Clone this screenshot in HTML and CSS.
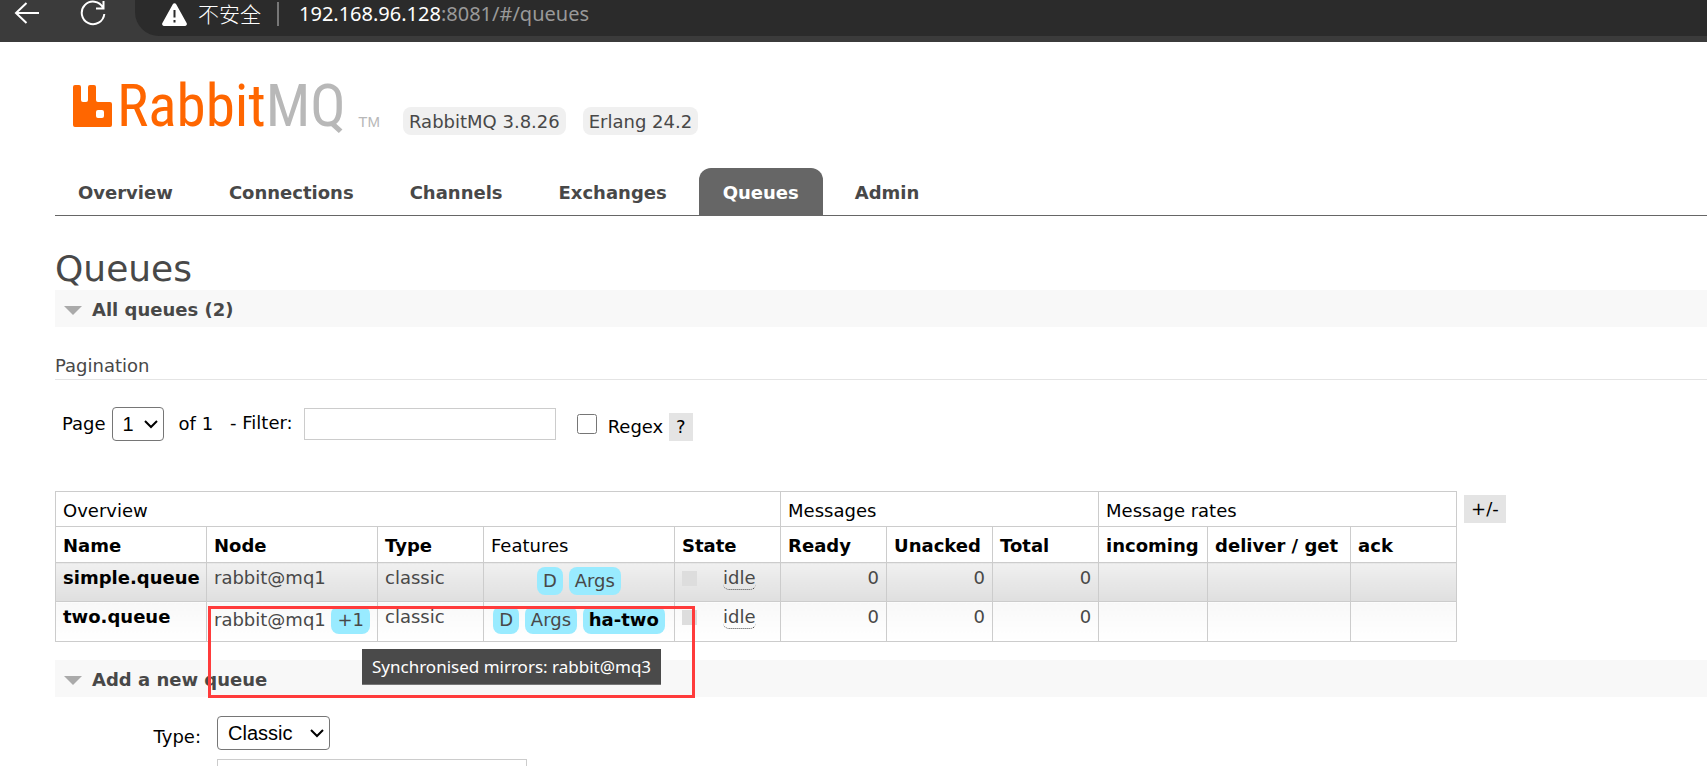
FILE: index.html
```html
<!DOCTYPE html>
<html lang="en">
<head>
<meta charset="utf-8">
<title>RabbitMQ Management</title>
<link rel="stylesheet" href="styles.css">
</head>
<body>
<div class="browser-bar">
  <button class="browser-btn" type="button" aria-label="Back">
    <svg width="26" height="26" viewBox="0 0 26 26" fill="none" stroke="#fff" stroke-width="2"><path d="M25 13H2M12.500 3L2 13l10.500 10"/></svg>
  </button>
  <button class="browser-btn reload" type="button" aria-label="Reload">
    <svg width="26" height="26" viewBox="0 0 26 26" fill="none" stroke="#fff" stroke-width="2"><path d="M23 7.500A11.300 11.300 0 1 0 24.300 14M23.500 1v7.500H16"/></svg>
  </button>
  <div class="address">
    <svg width="25" height="23" viewBox="0 0 25 23"><path d="M10.800 1.200a2 2 0 0 1 3.400 0L24.600 20a2 2 0 0 1-1.700 3H2.100a2 2 0 0 1-1.700-3z" fill="#fff"/><path d="M12.500 7v7.500M12.500 17v2.500" stroke="#2b2b2b" stroke-width="2"/></svg>
    <span class="insecure">不安全</span>
    <span class="divider"></span>
    <span class="url"><b>192.168.96.128</b>:8081/#/queues</span>
  </div>
</div>

<div class="page">
  <header class="header">
    <a class="logo" href="#" aria-label="RabbitMQ">
      <svg width="39" height="42" viewBox="0 0 39 42"><path fill="#f60" fill-rule="evenodd" d="M2 0h4q2 0 2 2v13q0 2 2 2h3q2 0 2-2V2q0-2 2-2h4q2 0 2 2v13q0 2 2 2h12q2 0 2 2v21q0 2-2 2H2q-2 0-2-2V2q0-2 2-2zM25 25q-2 0-2 2v4q0 2 2 2h4q2 0 2-2v-4q0-2-2-2z"/></svg>
      <span class="wordmark">Rabbit<span class="mq">MQ</span></span><span class="tm">TM</span>
    </a>
    <span class="version">RabbitMQ 3.8.26</span>
    <span class="version">Erlang 24.2</span>
  </header>

  <nav class="tabs">
    <a href="#">Overview</a>
    <a href="#">Connections</a>
    <a href="#">Channels</a>
    <a href="#">Exchanges</a>
    <a href="#" class="selected">Queues</a>
    <a href="#">Admin</a>
  </nav>

  <main class="main">
    <h1>Queues</h1>
    <h2 class="section"><span class="arrow"></span>All queues (2)</h2>

    <h3 class="subhead">Pagination</h3>
    <div class="pager">
      <label for="page">Page</label>
      <span class="picker page-picker">
        <select id="page" class="select"><option>1</option></select>
        <svg class="chevron" width="14" height="9" viewBox="0 0 14 9"><path d="M1 1l6 6 6-6" fill="none" stroke="#000" stroke-width="2"/></svg>
      </span>
      <span class="of">of 1</span>
      <label class="filter-label" for="filter">- Filter:</label>
      <input id="filter" class="text filter" type="text">
      <input id="regex" class="check" type="checkbox">
      <span class="regex"><label for="regex">Regex</label> <button class="help" type="button">?</button></span>
    </div>

    <div class="table-row">
      <table class="list">
        <colgroup><col class="c-name"><col class="c-node"><col class="c-num"><col class="c-feat"><col class="c-num"><col class="c-num"><col class="c-num"><col class="c-num"><col class="c-in"><col class="c-get"><col class="c-num"></colgroup>
        <thead>
          <tr class="group"><th colspan="5">Overview</th><th colspan="3">Messages</th><th colspan="3">Message rates</th></tr>
          <tr><th>Name</th><th>Node</th><th>Type</th><th class="plain">Features</th><th>State</th><th>Ready</th><th>Unacked</th><th>Total</th><th>incoming</th><th>deliver / get</th><th>ack</th></tr>
        </thead>
        <tbody>
          <tr class="alt">
            <td><a href="#">simple.queue</a></td><td>rabbit@mq1</td><td>classic</td>
            <td class="c"><span class="badge">D</span> <span class="badge">Args</span></td>
            <td><span class="state"><i></i><abbr>idle</abbr></span></td>
            <td class="r">0</td><td class="r">0</td><td class="r">0</td><td></td><td></td><td></td>
          </tr>
          <tr>
            <td><a href="#">two.queue</a></td><td>rabbit@mq1 <span class="badge">+1</span></td><td>classic</td>
            <td class="c"><span class="badge">D</span> <span class="badge">Args</span> <span class="badge"><a href="#">ha-two</a></span></td>
            <td><span class="state"><i></i><abbr>idle</abbr></span></td>
            <td class="r">0</td><td class="r">0</td><td class="r">0</td><td></td><td></td><td></td>
          </tr>
        </tbody>
      </table>
      <button class="help columns" type="button">+/-</button>
      <div class="marker"></div>
      <div class="tooltip" role="tooltip">Synchronised mirrors: rabbit@mq3</div>
    </div>

    <h2 class="section add"><span class="arrow"></span>Add a new queue</h2>
    <form class="form">
      <label for="type">Type:</label>
      <span class="picker type-picker">
        <select id="type" class="select"><option>Classic</option></select>
        <svg class="chevron" width="14" height="9" viewBox="0 0 14 9"><path d="M1 1l6 6 6-6" fill="none" stroke="#000" stroke-width="2"/></svg>
      </span>
      <input class="text name" type="text" aria-label="Name">
    </form>
  </main>
</div>
</body>
</html>
```
FILE: styles.css
```css
* { box-sizing: border-box; }
body {
  margin: 0;
  height: 100vh;
  overflow: hidden;
  background: #fff;
  color: #484848;
  font: 18px/22px Verdana, "DejaVu Sans", sans-serif;
}
a { color: inherit; text-decoration: none; }
button { border: 0; padding: 0; font: inherit; }

.browser-bar {
  display: flex;
  height: 42px;
  padding-left: 14px;
  background: #3b3b3b;
}
.browser-btn { display: flex; align-items: flex-start; width: 26px; background: none; }
.reload { margin-left: 40px; }
.address {
  flex: 1;
  display: flex;
  align-items: center;
  height: 36px;
  margin-left: 29px;
  padding: 0 0 8px 27px;
  background: #2b2b2b;
  border-bottom-left-radius: 24px;
  color: #999;
  font: 20px/28px "Noto Sans", "Noto Sans CJK SC", sans-serif;
}
.insecure { margin-left: 11px; padding-bottom: 2px; color: #fff; font-size: 21px; font-family: "Noto Sans CJK SC", sans-serif; font-weight: 300; }
.divider { width: 2px; height: 24px; margin: 0 20px 0 16px; background: #777; }
.url b { color: #fff; font-weight: 400; }

.page { padding-left: 55px; }
.header { display: flex; align-items: flex-end; height: 93px; padding-left: 18px; }
.logo { display: flex; align-items: flex-end; width: 307px; margin-right: 23px; padding-bottom: 8px; }
.wordmark {
  margin-left: 5px;
  color: #f60;
  font: 59px/42px "Roboto Condensed", "Roboto", sans-serif;
}
.mq { color: #b8b8b8; }
.tm { margin-left: auto; color: #b8b8b8; font: 15px/11px "Liberation Sans", sans-serif; }
.version { margin-right: 17px; padding: 4px 6px 2px; border-radius: 8px; background: #f0f0f0; }

.tabs { display: flex; gap: 8px; padding-top: 33px; border-bottom: 1px solid #666; }
.tabs a { padding: 14px 24px 11px; border-radius: 12px 12px 0 0; font-weight: 700; }
.tabs a:first-child { padding-left: 23px; }
.tabs .selected { background: #666; color: #fff; }

h1 { margin: 32px 0 0; font-size: 36px; line-height: 42px; font-weight: 400; }
.section { display: flex; align-items: center; gap: 10px; margin: 0; padding: 9px 9px 6px; background: #f8f8f8; font-size: 18px; font-weight: 700; }
.arrow { border: 9px solid transparent; border-top-color: #aaa; border-bottom: 0; }
.subhead { margin: 28px 0 0; padding-bottom: 2px; border-bottom: 1px solid #e4e4e4; font-size: 18px; font-weight: 400; }

.pager { display: flex; align-items: center; margin: 27px 0 50px; padding-left: 7px; color: #000; }
.picker { display: grid; align-items: center; }
.select { grid-area: 1 / 1; width: 100%; height: 34px; padding: 0 10px; appearance: none; border: 1px solid #767676; border-radius: 4px; background: #fff; color: #000; font: 20px "Liberation Sans", Arial, sans-serif; }
.chevron { grid-area: 1 / 1; justify-self: end; margin-right: 6px; pointer-events: none; }
.page-picker { width: 52px; margin-left: 6px; }
.of { margin-left: 15px; }
.filter-label { margin-left: 17px; padding-bottom: 3px; }
.text { border: 1px solid #ccc; background: #fff; font: inherit; }
.filter { width: 252px; height: 32px; margin-left: 11px; }
.check { width: 20px; height: 20px; margin: 0 11px 0 21px; }
.help { height: 28px; padding: 0 7px; background: #e4e4e4; color: #000; }
.regex { margin-top: 6px; }

.table-row { position: relative; display: flex; align-items: flex-start; }
.list { width: 1402px; table-layout: fixed; border-collapse: collapse; }
.c-name { width: 151px; }
.c-node { width: 171px; }
.c-num { width: 106px; }
.c-feat { width: 191px; }
.c-in { width: 109px; }
.c-get { width: 143px; }
.list th, .list td { border: 1px solid #ccc; padding: 6px 7px; text-align: left; vertical-align: top; white-space: nowrap; }
.list th { padding: 8px 7px 5px; color: #000; }
.list .group th { padding-bottom: 4px; }
.list .group th, .list .plain { font-weight: 400; }
.list td { height: 40px; padding: 4px 7px 5px; background: linear-gradient(#f8f8f8, #fff); }
.list .alt td { height: 39px; background: linear-gradient(#f0f0f0, #dfdfdf); }
.list td a { color: #000; font-weight: 700; }
.list .r { text-align: right; }
.list .c { text-align: center; }
.badge { display: inline-block; padding: 3px 6px; border-radius: 8px; background: #99ebff; }
.state { display: flex; gap: 26px; align-items: center; }
.state i { width: 15px; height: 15px; background: #ddd; }
.state abbr { border-bottom: 1px dotted #484848; border-radius: 6px; }
.columns { margin: 4px 0 0 7px; }

.marker { position: absolute; left: 153px; top: 115px; width: 487px; height: 92px; border: 3px solid #ff3b3b; }
.tooltip {
  position: absolute;
  left: 307px;
  top: 158px;
  padding: 7px 10px 6px;
  border-bottom: 1px solid #777;
  background: #4a4a4a;
  color: #fff;
  font: 17px/22px "Noto Sans", sans-serif;
  white-space: nowrap;
}

.add { margin-top: 18px; }
.form { display: grid; grid-template-columns: 146px 310px; column-gap: 16px; row-gap: 9px; align-items: center; margin-top: 19px; color: #000; }
.form label { padding-top: 8px; text-align: right; }
.type-picker { width: 113px; }
.name { grid-column: 2; height: 32px; }
```
